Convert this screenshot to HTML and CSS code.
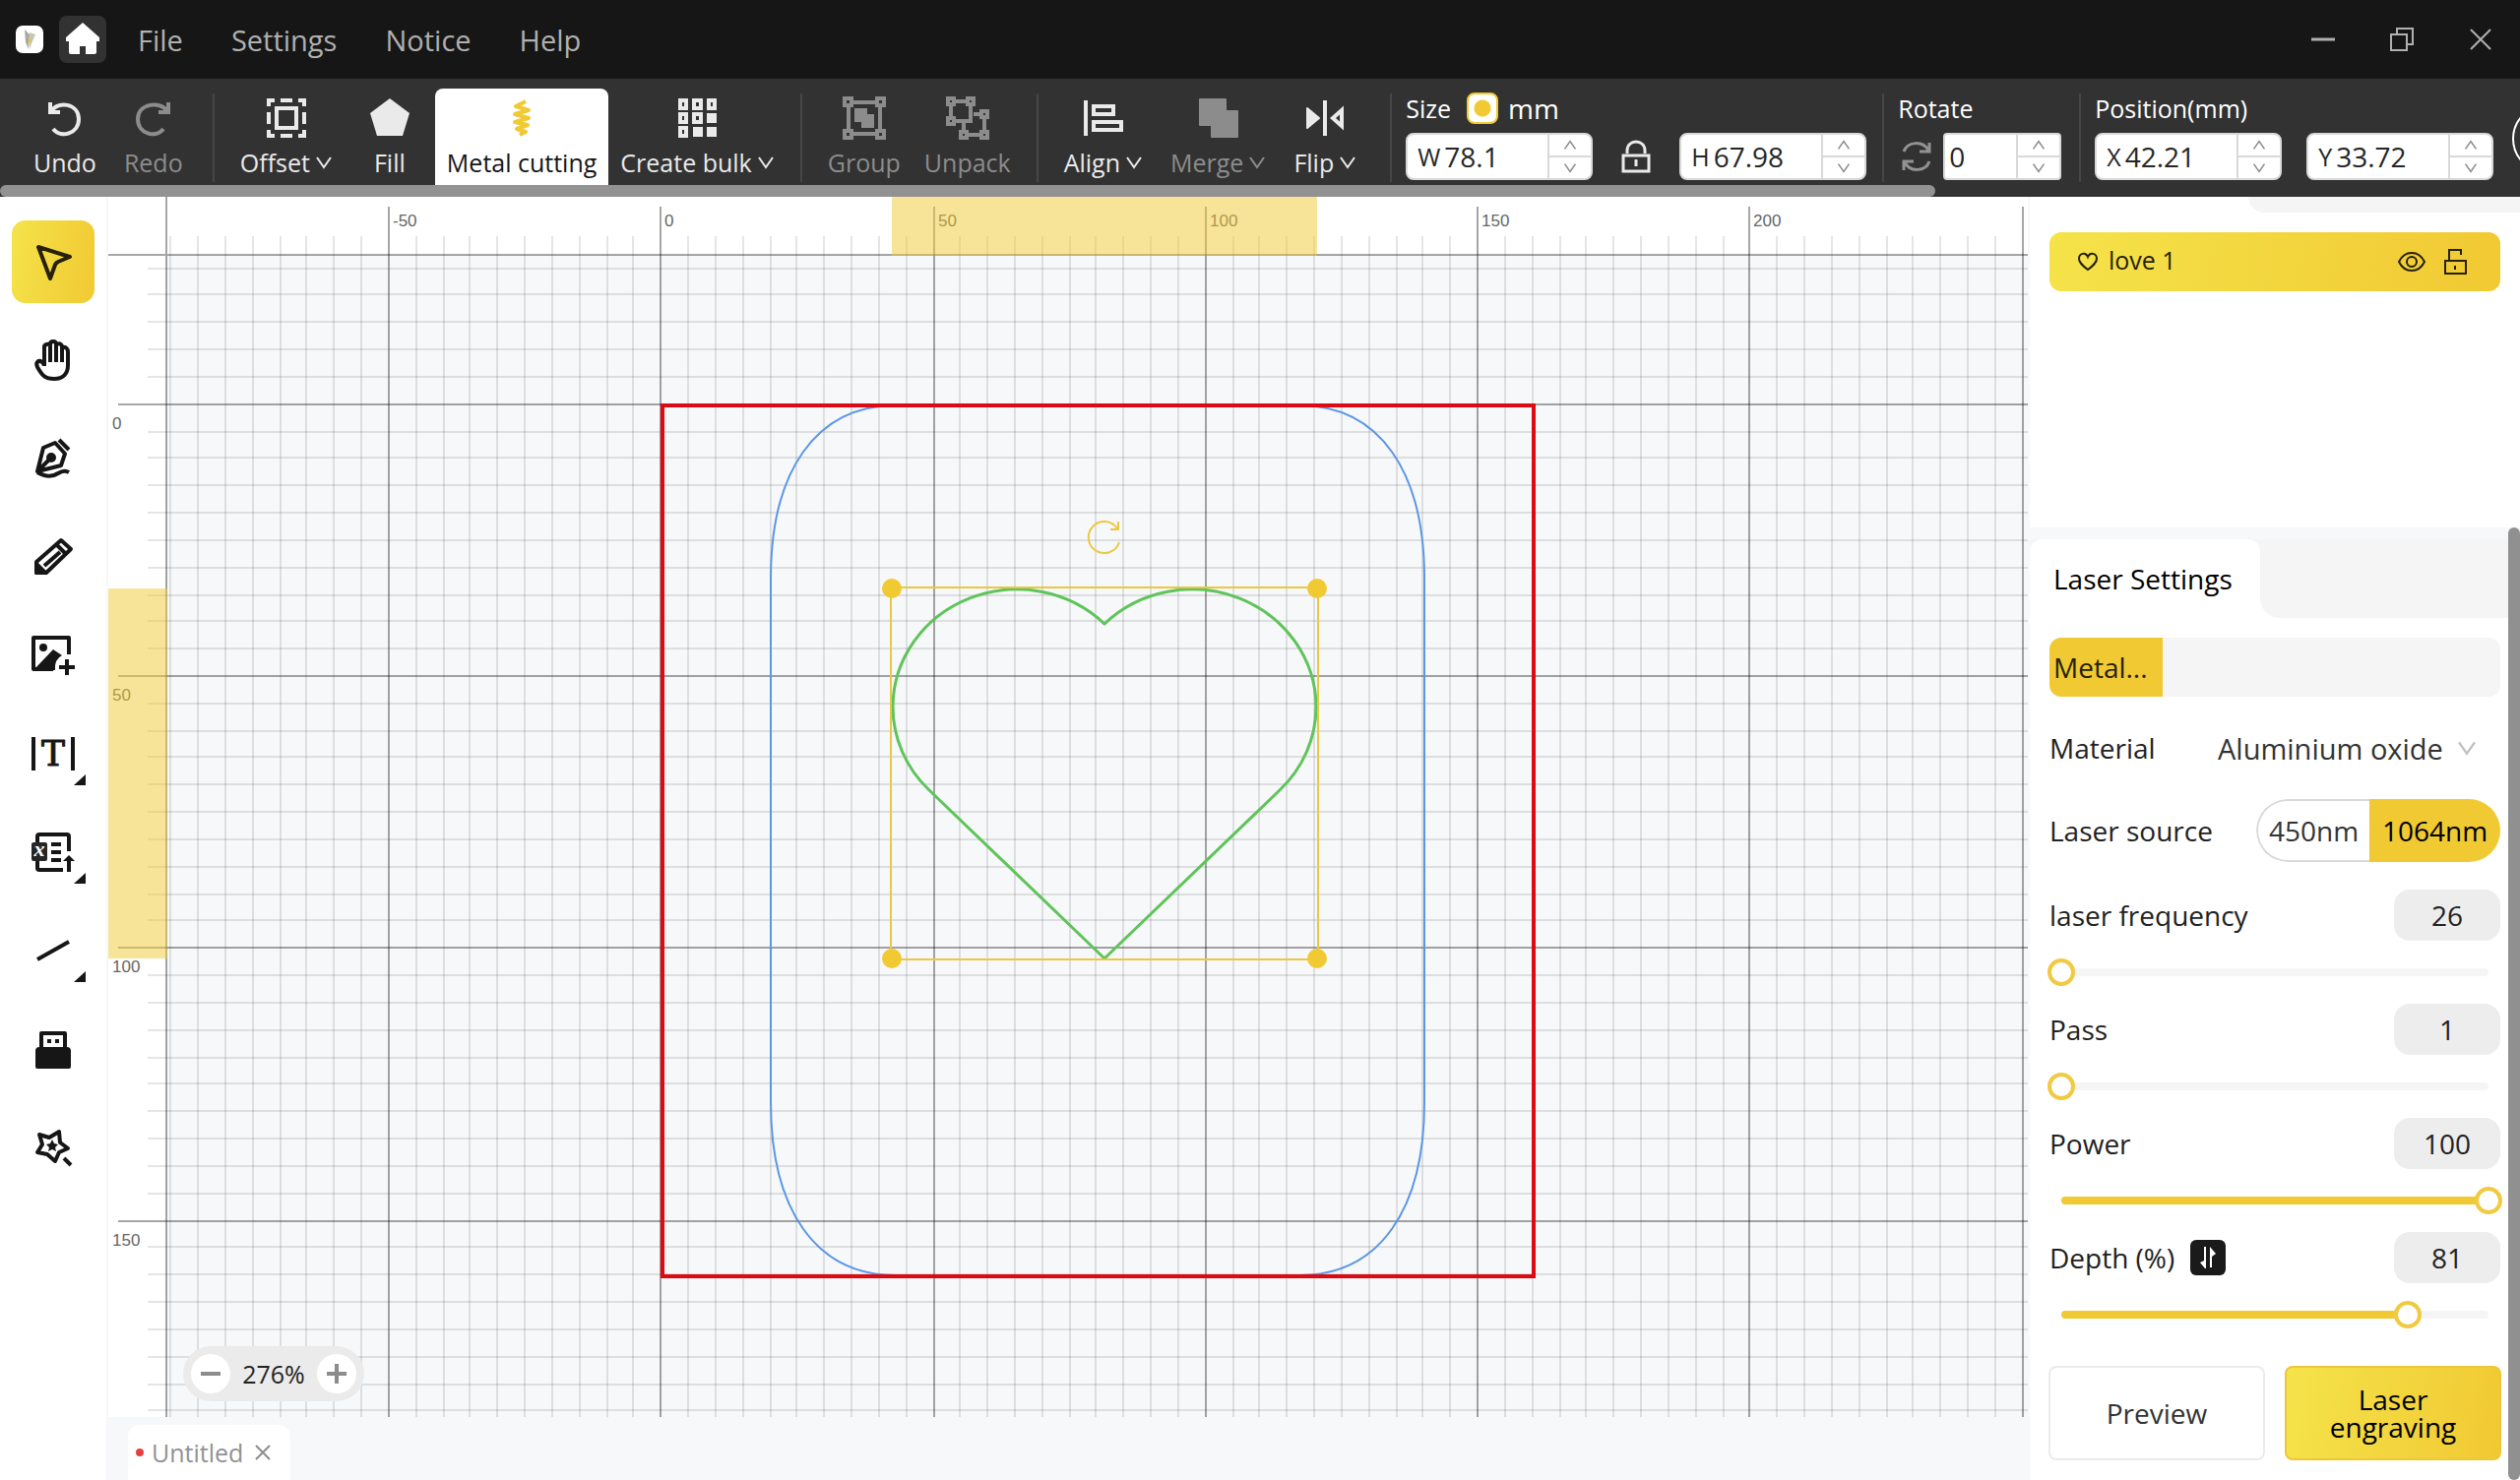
FILE: index.html
```html
<!DOCTYPE html>
<html lang="en">
<head>
    <meta charset="UTF-8">
    <meta name="viewport" content="width=device-width, initial-scale=1.0">
    <title>Untitled</title>
    <link rel="stylesheet" href="styles.css">
</head>
<body>
    <!-- Shared symbols -->
    <svg class="symbols" aria-hidden="true">
        <symbol id="chevron-down" viewBox="0 0 18 14"><path d="M2 2 L9 12 L16 2" fill="none" stroke="currentColor" stroke-width="2"/></symbol>
        <symbol id="chevron-up" viewBox="0 0 18 14"><path d="M2 12 L9 2 L16 12" fill="none" stroke="currentColor" stroke-width="2"/></symbol>
        <symbol id="corner" viewBox="0 0 84 84"><path d="M75 63 V74 H63 Z" fill="currentColor"/></symbol>
    </svg>

    <!-- Title bar -->
    <header class="titlebar">
        <svg class="app-logo" viewBox="0 0 28 28">
            <rect width="28" height="28" rx="7" fill="#fff"/>
            <path d="M9 4 L14 9 L13 24 L10 17 Z" fill="#a9a9a4"/>
            <path d="M14 7 L20 9 L17 16 L14 24 Z" fill="#c9c6b4"/>
            <path d="M13 13 L16 14 L14 20 Z" fill="#e8c53a"/>
        </svg>
        <button type="button" class="home-button" aria-label="Home">
            <svg viewBox="0 0 48 48"><path d="M24 7 L41 22 V26 H38 V37 Q38 39 36 39 H27 V31 H21 V39 H12 Q10 39 10 37 V26 H7 V22 Z" fill="#fff"/></svg>
        </button>
        <nav class="menu">
            <button type="button">File</button>
            <button type="button">Settings</button>
            <button type="button">Notice</button>
            <button type="button">Help</button>
        </nav>
        <div class="window-controls">
            <button type="button" aria-label="Minimize"><svg viewBox="0 0 24 24"><path d="M0 12 H24" stroke-width="3"/></svg></button>
            <button type="button" aria-label="Restore"><svg viewBox="0 0 24 24"><path d="M1 7 H17 V23 H1 Z M7 7 V1 H23 V17 H17"/></svg></button>
            <button type="button" aria-label="Close"><svg viewBox="0 0 24 24"><path d="M2 2 L22 22 M22 2 L2 22"/></svg></button>
        </div>
    </header>

    <!-- Toolbar -->
    <div class="toolbar">
        <div class="group history">
            <button type="button" class="tool">
                <svg viewBox="0 0 44 44"><path d="M7 6 V16 H17 M8 15 C15 4 36 7 36 23 C36 38 18 43 10 33" fill="none" stroke="currentColor" stroke-width="4"/></svg>
                <span>Undo</span>
            </button>
            <button type="button" class="tool" disabled>
                <svg viewBox="0 0 44 44"><path d="M37 6 V16 H27 M36 15 C29 4 6 7 6 23 C6 38 24 43 32 33" fill="none" stroke="currentColor" stroke-width="4"/></svg>
                <span>Redo</span>
            </button>
        </div>
        <div class="group edit">
            <button type="button" class="tool">
                <svg viewBox="0 0 44 44"><g fill="none" stroke="currentColor" stroke-width="4"><path d="M4 10 V4 H10 M16 4 H28 M34 4 H40 V10 M40 16 V28 M40 34 V40 H34 M28 40 H16 M10 40 H4 V34 M4 28 V16"/><rect x="12" y="12" width="20" height="20"/></g></svg>
                <span>Offset<svg class="chevron"><use href="#chevron-down"/></svg></span>
            </button>
            <button type="button" class="tool">
                <svg viewBox="0 0 44 44"><path d="M22 2 L42 17 L35 40 H9 L2 17 Z" fill="currentColor"/></svg>
                <span>Fill</span>
            </button>
            <button type="button" class="tool active">
                <svg viewBox="0 0 44 44"><path d="M26 5 L16 10 L29 14 L15 18 L29 22 L15 26 L28 29 L17 33 L26 36 L20 39" fill="none" stroke="#f1ca33" stroke-width="4" stroke-linejoin="round"/></svg>
                <span>Metal cutting</span>
            </button>
            <button type="button" class="tool">
                <svg viewBox="0 0 44 44"><g fill="none" stroke="currentColor" stroke-width="4"><path d="M4 4 H10 V12 H4 Z M18 4 H25 V12 H18 Z M33 4 H39 V12 H33 Z M4 18 H10 V26 H4 Z M18 18 H25 V26 H18 Z M4 32 H10 V40 H4 Z"/></g><path d="M31 17 H41 V27 H31 Z M17 31 H27 V41 H17 Z M31 31 H41 V41 H31 Z" fill="currentColor"/></svg>
                <span>Create bulk<svg class="chevron"><use href="#chevron-down"/></svg></span>
            </button>
        </div>
        <div class="group">
            <button type="button" class="tool" disabled>
                <svg viewBox="0 0 44 44"><g fill="none" stroke="currentColor" stroke-width="4"><path d="M2 2 H9 V9 H2 Z M35 2 H42 V9 H35 Z M2 35 H9 V42 H2 Z M35 35 H42 V42 H35 Z M9 6 H35 M9 38 H35 M6 9 V35 M38 9 V35"/></g><path d="M12 12 H25 V18 H32 V32 H19 V26 H12 Z" fill="currentColor"/></svg>
                <span>Group</span>
            </button>
            <button type="button" class="tool" disabled>
                <svg viewBox="0 0 44 44"><g fill="none" stroke="currentColor" stroke-width="4"><path d="M2 2 H8 V8 H2 Z M22 2 H28 V8 H22 Z M2 22 H8 V28 H2 Z M36 15 H42 V21 H36 Z M15 36 H21 V42 H15 Z M36 36 H42 V42 H36 Z M8 5 H22 M5 8 V22 M25 8 V25 H8 M28 18 H36 M39 21 V36 M36 39 H21 M18 36 V27"/></g></svg>
                <span>Unpack</span>
            </button>
        </div>
        <div class="group arrange">
            <button type="button" class="tool">
                <svg viewBox="0 0 44 44"><path d="M4 4 V40 M12 10 H32 V18 H12 Z M12 26 H40 V34 H12 Z" fill="none" stroke="currentColor" stroke-width="4"/></svg>
                <span>Align<svg class="chevron"><use href="#chevron-down"/></svg></span>
            </button>
            <button type="button" class="tool" disabled>
                <svg viewBox="0 0 44 44"><path d="M2 3 Q2 2 3 2 H29 Q30 2 30 3 V14 H41 Q42 14 42 15 V41 Q42 42 41 42 H15 Q14 42 14 41 V30 H3 Q2 30 2 29 Z" fill="currentColor"/></svg>
                <span>Merge<svg class="chevron"><use href="#chevron-down"/></svg></span>
            </button>
            <button type="button" class="tool">
                <svg viewBox="0 0 44 44"><path d="M22 4 V40" stroke="currentColor" stroke-width="4"/><path d="M4 12 L16 22 L4 32 Z" fill="currentColor" stroke="currentColor" stroke-width="2" stroke-linejoin="round"/><path d="M39 14 L30 22 L39 30 Z" fill="none" stroke="currentColor" stroke-width="4"/></svg>
                <span>Flip<svg class="chevron"><use href="#chevron-down"/></svg></span>
            </button>
        </div>
        <div class="fields">
            <div class="fields-title">
                Size
                <label class="unit"><input type="checkbox" checked>mm</label>
            </div>
            <div class="fields-row">
                <div class="number">
                    <label for="sizeW">W</label>
                    <input type="text" id="sizeW" value="78.1">
                    <div class="spin">
                        <button type="button" aria-label="Increase"><svg><use href="#chevron-up"/></svg></button>
                        <button type="button" aria-label="Decrease"><svg><use href="#chevron-down"/></svg></button>
                    </div>
                </div>
                <button type="button" class="icon-button" aria-label="Lock ratio">
                    <svg viewBox="0 0 30 34"><path d="M6 14 V11 C6 -1 24 -1 24 11 V14 M2 16 H28 V32 H2 Z M15 20 V27" fill="none" stroke="#eaeaea" stroke-width="3"/></svg>
                </button>
                <div class="number">
                    <label for="sizeH">H</label>
                    <input type="text" id="sizeH" value="67.98">
                    <div class="spin">
                        <button type="button" aria-label="Increase"><svg><use href="#chevron-up"/></svg></button>
                        <button type="button" aria-label="Decrease"><svg><use href="#chevron-down"/></svg></button>
                    </div>
                </div>
            </div>
        </div>
        <div class="fields rotate">
            <label class="fields-title" for="rotate">Rotate</label>
            <div class="fields-row">
                <button type="button" class="icon-button" aria-label="Reset rotation">
                    <svg viewBox="0 0 30 34"><path d="M2 12 C6 1 22 1 27 11 M28 3 V12 H18 M28 22 C24 33 8 33 3 23 M2 31 V22 H12" fill="none" stroke="#929292" stroke-width="3"/></svg>
                </button>
                <div class="number small">
                    <input type="text" id="rotate" value="0">
                    <div class="spin">
                        <button type="button" aria-label="Increase"><svg><use href="#chevron-up"/></svg></button>
                        <button type="button" aria-label="Decrease"><svg><use href="#chevron-down"/></svg></button>
                    </div>
                </div>
            </div>
        </div>
        <div class="fields position">
            <div class="fields-title">Position(mm)</div>
            <div class="fields-row">
                <div class="number">
                    <label for="posX">X</label>
                    <input type="text" id="posX" value="42.21">
                    <div class="spin">
                        <button type="button" aria-label="Increase"><svg><use href="#chevron-up"/></svg></button>
                        <button type="button" aria-label="Decrease"><svg><use href="#chevron-down"/></svg></button>
                    </div>
                </div>
                <div class="number">
                    <label for="posY">Y</label>
                    <input type="text" id="posY" value="33.72">
                    <div class="spin">
                        <button type="button" aria-label="Increase"><svg><use href="#chevron-up"/></svg></button>
                        <button type="button" aria-label="Decrease"><svg><use href="#chevron-down"/></svg></button>
                    </div>
                </div>
            </div>
        </div>
        <button type="button" class="round-button" aria-label="More"></button>
    </div>
    <div class="toolbar-scroll"><div class="toolbar-thumb"></div></div>

    <main class="workspace">
        <!-- Left tools -->
        <aside class="sidebar">
            <button type="button" class="active" aria-label="Select">
                <svg viewBox="0 0 84 84"><path d="M27 27 L59 37 L47 42 Q45 43 44 45 L39 59 Z"/></svg>
            </button>
            <button type="button" aria-label="Pan">
                <svg viewBox="0 0 84 84"><path d="M33 48 V28 Q34 25 39 26 M39 44 V26 Q39 23 42 23 Q45 23 45 26 V44 M45 26 Q50 24 51 28 V44 M51 29 Q57 28 57 34 V47 C57 56 52 61 43 61 C34 61 31 58 26 49 Q24 45 27 43 Q30 42 33 47"/></svg>
            </button>
            <button type="button" aria-label="Pen">
                <svg viewBox="0 0 84 84"><path d="M26 55 L32 31 L44 26 L54 37 L50 49 Z M26 55 L39 42 M48 23 L58 33 M26 56 Q38 63 47 57 Q53 53 58 56"/><circle cx="40" cy="41" r="3" fill="currentColor"/></svg>
            </button>
            <button type="button" aria-label="Pencil">
                <svg viewBox="0 0 84 84"><path d="M25 58 V47 L50 25 L60 34 L35 58 Z M45 29 L55 39 M33 51 L49 37"/><path d="M25 58 V49 L34 58 Z" fill="currentColor"/></svg>
            </button>
            <button type="button" aria-label="Image">
                <svg viewBox="0 0 84 84"><path d="M58 41 V24 H22 V56 H42 M56 46 V62 M48 54 H64"/><path d="M22 57 L42 36 L51 42 Q43 46 44 57 Z" fill="currentColor" stroke="none"/><circle cx="32" cy="34" r="4" fill="currentColor" stroke="none"/></svg>
            </button>
            <button type="button" aria-label="Text">
                <svg viewBox="0 0 84 84"><path d="M22 25 V59 M62 25 V59"/><text x="42" y="54" class="glyph-t">T</text><use href="#corner" stroke="none"/></svg>
            </button>
            <button type="button" aria-label="Import">
                <svg viewBox="0 0 84 84"><path d="M26 32 V26 Q26 24 28 24 H56 Q58 24 58 26 V41 M26 51 V58 Q26 60 28 60 H52 M40 34 H50 M40 42 H50 M40 50 H50 M58 51 V62"/><path d="M52 51 L58 45 L64 51 Z" fill="currentColor" stroke="none"/><rect x="20" y="32" width="16" height="19" rx="2" fill="#262626" stroke="none"/><text x="28" y="46" class="glyph-x">x</text><use href="#corner" stroke="none"/></svg>
            </button>
            <button type="button" aria-label="Line">
                <svg viewBox="0 0 84 84"><path d="M26 51 L58 33"/><use href="#corner" stroke="none"/></svg>
            </button>
            <button type="button" aria-label="USB">
                <svg viewBox="0 0 84 84"><path d="M30 42 V26 H54 V42"/><path d="M28 40 H56 Q60 40 60 44 V60 Q60 62 58 62 H26 Q24 62 24 60 V44 Q24 40 28 40 Z M36 32 H40 V36 H36 Z M44 32 H48 V36 H44 Z" fill="currentColor" stroke="none"/></svg>
            </button>
            <button type="button" aria-label="Magic">
                <svg viewBox="0 0 84 84"><path d="M28 29 L38 32 L48 26 L49 37 L57 43 L48 47 L44 56 L36 49 L26 47 L31 39 Z M53 53 L60 60" /><path d="M41 34 L43 38 L47 39 L44 42 L45 46 L41 44 L37 46 L38 42 L35 39 L39 38 Z" fill="currentColor" stroke="none"/></svg>
            </button>
        </aside>

        <!-- Canvas -->
        <section class="stage">
            <div class="canvas">
                <svg class="board">
                    <rect class="grid-bg" x="59" y="59" width="100%" height="100%"/>
                    <g id="grid"></g>
                    <path class="major" d="M59 0 V4000 M0 59 H4000"/>
                    <g id="labels"></g>
                    <rect class="ruler-mark" x="796" y="0" width="432" height="60"/>
                    <rect class="ruler-mark" x="0" y="398" width="60" height="376"/>
                    <path class="plate" d="M800 212 H1210 C1292 212 1337 280 1337 388 V920 C1337 1028 1292 1096 1210 1096 H800 C718 1096 673 1028 673 920 V388 C673 280 718 212 800 212 Z"/>
                    <rect class="work-area" x="563" y="212" width="885" height="885"/>
                    <path class="heart" d="M1012 434 A126 120 0 0 0 797 518 A126 120 0 0 0 834 603 L1012 774 L1190 603 A126 120 0 0 0 1227 518 A126 120 0 0 0 1012 434 Z"/>
                    <rect class="selection" x="795" y="397" width="434" height="378"/>
                    <g class="handles">
                        <circle cx="796" cy="398" r="10"/>
                        <circle cx="1228" cy="398" r="10"/>
                        <circle cx="796" cy="774" r="10"/>
                        <circle cx="1228" cy="774" r="10"/>
                    </g>
                    <path class="rotate-handle" d="M1027 351 A16 16 0 1 1 1025 337 M1026 330 V338 H1018"/>
                </svg>
                <div class="zoom">
                    <button type="button" aria-label="Zoom out"><svg viewBox="0 0 20 20"><path d="M0 10 H20"/></svg></button>
                    <span>276%</span>
                    <button type="button" aria-label="Zoom in"><svg viewBox="0 0 20 20"><path d="M0 10 H20 M10 0 V20"/></svg></button>
                </div>
            </div>
            <footer class="tabs">
                <div class="tab">
                    <span class="dot"></span>
                    <span>Untitled</span>
                    <button type="button" aria-label="Close tab"><svg viewBox="0 0 16 16"><path d="M1 1 L15 15 M15 1 L1 15"/></svg></button>
                </div>
            </footer>
        </section>

        <!-- Right panel -->
        <aside class="panel">
            <div class="layers">
                <div class="layers-head"></div>
                <div class="layer">
                    <svg class="layer-heart" viewBox="0 0 22 20"><path d="M11 18 C6 14 2 11 2 7 C2 1 9 0 11 5 C13 0 20 1 20 7 C20 11 16 14 11 18 Z"/></svg>
                    <span class="layer-name">love 1</span>
                    <button type="button" aria-label="Visible"><svg viewBox="0 0 28 28"><path d="M1 14 C7 2 21 2 27 14 C21 26 7 26 1 14 Z"/><circle cx="14" cy="14" r="5"/></svg></button>
                    <button type="button" aria-label="Unlock"><svg viewBox="0 0 28 28"><path d="M4 13 H25 V26 H4 Z M8 13 V2 H20 V7 M14 18 V22"/></svg></button>
                </div>
            </div>
            <div class="settings">
                <div class="settings-body">
                    <div class="settings-head">
                        <h2>Laser Settings</h2>
                        <div class="head-rest"></div>
                    </div>
                    <div class="modes"><button type="button">Metal...</button></div>
                    <div class="row material">
                        <label for="material">Material</label>
                        <div class="select">
                            <select id="material"><option>Aluminium oxide</option></select>
                            <svg><use href="#chevron-down"/></svg>
                        </div>
                    </div>
                    <div class="row source">
                        <span>Laser source</span>
                        <div class="segment">
                            <button type="button">450nm</button>
                            <button type="button" class="on">1064nm</button>
                        </div>
                    </div>
                    <div class="param">
                        <div class="row">
                            <label for="frequency">laser frequency</label>
                            <input type="text" class="value" aria-label="laser frequency value" value="26">
                        </div>
                        <div class="slider">
                            <div class="track"><div class="fill" style="width: 0%"></div></div>
                            <input type="range" id="frequency" min="26" max="60" value="26">
                        </div>
                    </div>
                    <div class="param">
                        <div class="row">
                            <label for="pass">Pass</label>
                            <input type="text" class="value" aria-label="Pass value" value="1">
                        </div>
                        <div class="slider">
                            <div class="track"><div class="fill" style="width: 0%"></div></div>
                            <input type="range" id="pass" min="1" max="99" value="1">
                        </div>
                    </div>
                    <div class="param">
                        <div class="row">
                            <label for="power">Power</label>
                            <input type="text" class="value" aria-label="Power value" value="100">
                        </div>
                        <div class="slider">
                            <div class="track"><div class="fill" style="width: 100%"></div></div>
                            <input type="range" id="power" min="0" max="100" value="100">
                        </div>
                    </div>
                    <div class="param">
                        <div class="row">
                            <div class="depth">
                                <label for="depth">Depth (%)</label>
                                <button type="button" aria-label="Switch depth and speed"><svg viewBox="0 0 36 36"><rect width="36" height="36" rx="6" fill="#1a1a1a"/><path d="M14 7 H16 V29 H15 L10 23 L14 21 Z M20 7 L26 14 L22 17 V28 H20 Z" fill="#fff"/></svg></button>
                            </div>
                            <input type="text" class="value" aria-label="Depth value" value="81">
                        </div>
                        <div class="slider">
                            <div class="track"><div class="fill" style="width: 81%"></div></div>
                            <input type="range" id="depth" min="0" max="100" value="81">
                        </div>
                    </div>
                    <div class="actions">
                        <button type="button" class="preview">Preview</button>
                        <button type="button" class="engrave">Laser engraving</button>
                    </div>
                </div>
                <div class="scrollbar"></div>
            </div>
        </aside>
    </main>

    <script>
        // Ruler and grid: one cell is 5 mm, every tenth line is labelled
        const cell = 27.66;
        const originX = 561.4;
        const originY = 210.4;
        const grid = document.getElementById('grid');
        const labels = document.getElementById('labels');
        const canvas = document.querySelector('.canvas');

        function snap(value) {
            return 2 * Math.floor(value / 2) + 1;
        }

        function addLine(d, major) {
            const path = document.createElementNS('http://www.w3.org/2000/svg', 'path');
            path.setAttribute('d', d);
            path.setAttribute('class', major ? 'major' : 'minor');
            grid.appendChild(path);
        }

        function addLabel(x, y, text) {
            const label = document.createElementNS('http://www.w3.org/2000/svg', 'text');
            label.setAttribute('x', x);
            label.setAttribute('y', y);
            label.textContent = text;
            labels.appendChild(label);
        }

        function drawGrid() {
            const width = canvas.clientWidth;
            const height = canvas.clientHeight;
            grid.textContent = '';
            labels.textContent = '';

            for (let i = -18; originX + i * cell < width; i++) {
                const x = snap(originX + i * cell);
                const major = i % 10 === 0;
                addLine(`M${x} ${major ? 10 : 40} V${height}`, major);
                if (major && x + 40 < width) {
                    addLabel(x + 4, 30, i * 5);
                }
            }
            for (let i = -5; originY + i * cell < height; i++) {
                const y = snap(originY + i * cell);
                const major = i % 10 === 0;
                addLine(`M${major ? 10 : 40} ${y} H${width}`, major);
                if (major) {
                    addLabel(4, y + 25, i * 5);
                }
            }
        }

        drawGrid();
        window.addEventListener('resize', drawGrid);
    </script>
</body>
</html>
```
FILE: styles.css
```css
* {
    box-sizing: border-box;
}
body {
    margin: 0;
    height: 100vh;
    display: flex;
    flex-direction: column;
    overflow: hidden;
    font-family: "Open Sans", "Noto Sans", sans-serif;
    font-size: 28px;
    color: #222;
    background-color: #fff;
}
button, input, select {
    font: inherit;
    color: inherit;
    margin: 0;
    padding: 0;
    border: none;
    background: none;
}
button {
    cursor: pointer;
}
svg {
    display: block;
}
.symbols {
    position: absolute;
    width: 0;
    height: 0;
}

/* Title bar */
.titlebar {
    height: 80px;
    flex: none;
    display: flex;
    align-items: center;
    padding-left: 16px;
    background-color: #161616;
    color: #b0b0b0;
}
.app-logo {
    width: 28px;
    height: 28px;
    margin-right: 16px;
}
.home-button {
    width: 48px;
    height: 48px;
    border-radius: 8px;
    background-color: #323232;
}
.menu {
    display: flex;
    gap: 49px;
    margin-left: 32px;
    font-size: 29px;
}
.window-controls {
    display: flex;
    gap: 56px;
    margin-left: auto;
    padding-right: 28px;
}
.window-controls svg {
    width: 24px;
    height: 24px;
    fill: none;
    stroke: #b0b0b0;
    stroke-width: 2;
}

/* Toolbar */
.toolbar {
    height: 108px;
    flex: none;
    display: flex;
    padding-top: 10px;
    overflow: hidden;
    background-color: #323232;
    color: #eaeaea;
    font-size: 25px;
}
.group, .fields {
    flex: none;
    display: flex;
    position: relative;
}
.group {
    padding: 0 16px 0 14px;
}
.group.history {
    gap: 4px;
    padding: 0 20px 0 22px;
}
.group.edit {
    gap: 12px;
}
.group.arrange {
    gap: 4px;
    padding-right: 24px;
}
.group::after, .fields::after {
    content: "";
    position: absolute;
    right: 0;
    top: 5px;
    width: 2px;
    height: 90px;
    background-color: #464646;
}
.fields.position::after {
    display: none;
}
.tool {
    display: flex;
    flex-direction: column;
    align-items: center;
    gap: 5px;
    padding: 8px 12px 0;
    white-space: nowrap;
}
.tool:disabled {
    color: #8c8c8c;
}
.tool.active {
    margin-right: -12px;
    border-radius: 8px 8px 0 0;
    background-color: #fff;
    color: #161616;
}
.tool > svg {
    width: 44px;
    height: 44px;
}
.tool span {
    display: flex;
    align-items: center;
    gap: 5px;
    line-height: 36px;
}
.chevron {
    width: 18px;
    height: 14px;
}
.fields {
    width: 500px;
    flex-direction: column;
    padding-left: 14px;
}
.fields.rotate {
    width: 200px;
}
.fields.position {
    width: 438px;
}
.fields-title {
    display: flex;
    align-items: center;
    height: 40px;
    color: #fff;
}
.unit {
    display: flex;
    align-items: center;
    gap: 10px;
    margin-left: 16px;
    font-size: 28px;
}
.unit input {
    appearance: none;
    width: 32px;
    height: 32px;
    border: 2px solid #f1ca33;
    border-radius: 8px;
    background: radial-gradient(circle, #f1ca33 8px, #fff 9px);
}
.fields-row {
    display: flex;
    align-items: center;
    gap: 29px;
    margin-top: 5px;
    height: 48px;
}
.rotate .fields-row {
    gap: 12px;
    padding-left: 4px;
}
.position .fields-row {
    gap: 25px;
}
.icon-button {
    width: 30px;
    height: 34px;
}
.number {
    display: flex;
    align-items: center;
    width: 190px;
    height: 48px;
    overflow: hidden;
    border: 2px solid #d9d9d9;
    border-radius: 8px;
    background-color: #fff;
    color: #262626;
}
.number label {
    padding: 0 4px 0 10px;
}
.number input {
    flex: 1;
    width: 0;
    font-size: 28px;
}
.number.small {
    width: 120px;
    border-radius: 4px;
}
.number.small input {
    padding-left: 4px;
}
.spin {
    display: flex;
    flex-direction: column;
    width: 44px;
    height: 100%;
    border-left: 2px solid #d9d9d9;
}
.spin button {
    display: flex;
    flex: 1;
    align-items: center;
    justify-content: center;
    color: #8c8c8c;
}
.spin button + button {
    border-top: 2px solid #d9d9d9;
}
.spin svg {
    width: 14px;
    height: 11px;
}
.round-button {
    flex: none;
    width: 70px;
    height: 70px;
    margin-top: 16px;
    border: 2px solid #fff;
    border-radius: 50%;
}
.toolbar-scroll {
    flex: none;
    height: 12px;
    background-color: #323232;
}
.toolbar-thumb {
    width: 76.8%;
    height: 12px;
    border-radius: 6px;
    background-color: #929292;
}

/* Left tools */
.workspace {
    flex: 1;
    min-height: 0;
    display: flex;
}
.sidebar {
    flex: none;
    display: flex;
    flex-direction: column;
    align-items: flex-start;
    gap: 16px;
    width: 110px;
    padding: 24px 0 0 12px;
    border-right: 2px solid #f7f8fa;
    color: #161616;
}
.sidebar button {
    width: 84px;
    height: 84px;
    border-radius: 14px;
}
.sidebar .active {
    background: linear-gradient(100deg, #f5e34a, #f1c933);
    color: #262108;
}
.sidebar svg {
    fill: none;
    stroke: currentColor;
    stroke-width: 4;
    stroke-linejoin: round;
}
.glyph-t, .glyph-x {
    fill: currentColor;
    stroke: none;
    text-anchor: middle;
    font: 36px "DejaVu Serif", serif;
}
.glyph-t {
    stroke: currentColor;
    stroke-width: 1;
}
.glyph-x {
    fill: #fff;
    font: italic bold 22px "Liberation Serif", serif;
}

/* Canvas */
.stage {
    flex: 1;
    min-width: 0;
    display: flex;
    flex-direction: column;
    background-color: #f7f8fa;
}
.canvas {
    flex: 1;
    min-height: 0;
    position: relative;
    background-color: #fff;
}
.board {
    position: absolute;
    width: 100%;
    height: 100%;
    fill: none;
}
.grid-bg {
    fill: #f7f8fa;
}
.minor {
    stroke: rgba(0, 0, 0, 0.1);
    stroke-width: 2;
}
.major {
    stroke: rgba(0, 0, 0, 0.35);
    stroke-width: 2;
}
#labels {
    fill: #666;
    font: 17px "Liberation Sans", Arial, sans-serif;
}
.ruler-mark {
    fill: #f1ca33;
    fill-opacity: 0.5;
}
.work-area {
    stroke: #dd0a14;
    stroke-width: 4;
}
.plate {
    stroke: #5b97e5;
    stroke-width: 2;
}
.heart {
    stroke: #5fc45a;
    stroke-width: 3;
}
.selection, .rotate-handle {
    stroke: #ebc842;
    stroke-width: 2;
}
.handles {
    fill: #f1ca33;
}
.zoom {
    position: absolute;
    left: 76px;
    bottom: 16px;
    display: flex;
    align-items: center;
    justify-content: space-between;
    width: 184px;
    height: 56px;
    padding: 0 8px;
    border-radius: 28px;
    background-color: #ebebeb;
    font-size: 25px;
}
.zoom button {
    display: flex;
    align-items: center;
    justify-content: center;
    width: 40px;
    height: 40px;
    border-radius: 50%;
    background-color: #fff;
}
.zoom svg {
    width: 20px;
    height: 20px;
    stroke: #8c8c8c;
    stroke-width: 4;
}
.tabs {
    flex: none;
    display: flex;
    height: 64px;
    padding: 8px 20px 0;
}
.tab {
    display: flex;
    align-items: center;
    padding: 0 20px 0 8px;
    border-radius: 12px 12px 0 0;
    background-color: #fff;
    color: #929292;
    font-size: 25px;
}
.dot {
    width: 8px;
    height: 8px;
    margin-right: 8px;
    border-radius: 50%;
    background-color: #e5403f;
}
.tab button {
    margin-left: 12px;
}
.tab svg {
    width: 16px;
    height: 16px;
    stroke: #8c8c8c;
    stroke-width: 2;
}

/* Right panel */
.panel {
    flex: none;
    display: flex;
    flex-direction: column;
    width: 500px;
    border-left: 2px solid #f7f8fa;
}
.layers {
    flex: none;
    height: 336px;
}
.layers-head {
    height: 16px;
    margin-left: 222px;
    border-radius: 0 0 0 20px;
    background-color: #f5f5f5;
}
.layer {
    display: flex;
    align-items: center;
    height: 60px;
    margin: 20px 20px 0;
    padding: 0 32px 0 28px;
    border-radius: 12px;
    background: linear-gradient(100deg, #f5e34a, #f1c933);
    color: #262108;
    font-size: 25px;
}
.layer svg {
    fill: none;
    stroke: currentColor;
    stroke-width: 2;
}
.layer-heart {
    width: 22px;
    height: 20px;
}
.layer-name {
    flex: 1;
    margin: 0 0 4px 10px;
}
.layer button {
    margin-left: 16px;
}
.layer button svg {
    width: 28px;
    height: 28px;
}
.settings {
    flex: 1;
    min-height: 0;
    display: flex;
    border-top: 12px solid #f7f8fa;
}
.settings-body {
    flex: 1;
    min-width: 0;
    display: flex;
    flex-direction: column;
}
.scrollbar {
    width: 12px;
    margin-top: -12px;
    border-radius: 6px;
    background-color: #909090;
}
.settings-head {
    display: flex;
    height: 80px;
    background: linear-gradient(#f5f5f5 50%, #fff 50%);
}
.settings-head h2 {
    width: 234px;
    margin: 0;
    padding-left: 24px;
    border-radius: 12px 12px 0 0;
    background-color: #fff;
    color: #000;
    font-size: 28px;
    font-weight: normal;
    line-height: 80px;
    white-space: nowrap;
}
.head-rest {
    flex: 1;
    border-radius: 0 0 0 20px;
    background-color: #f5f5f5;
}
.modes {
    height: 60px;
    margin: 20px 8px 0 20px;
    overflow: hidden;
    border-radius: 12px;
    background-color: #f5f5f5;
}
.modes button {
    width: 115px;
    height: 60px;
    padding-left: 4px;
    background-color: #f1ca33;
    color: #262108;
    text-align: left;
}
.row {
    display: flex;
    align-items: center;
    justify-content: space-between;
    padding: 0 8px 0 20px;
}
.material {
    height: 104px;
}
.select {
    display: flex;
    align-items: center;
    gap: 12px;
    padding-right: 22px;
    color: #333;
    font-size: 29px;
}
.select select {
    appearance: none;
}
.select svg {
    width: 24px;
    height: 16px;
    color: #bfbfbf;
}
.segment {
    display: flex;
    width: 248px;
    height: 64px;
    overflow: hidden;
    border-radius: 32px;
    color: #333;
}
.segment button {
    flex: 1;
    border: 2px solid #d9d9d9;
    border-right: none;
    border-radius: 32px 0 0 32px;
}
.segment .on {
    flex: none;
    width: 133px;
    border: none;
    border-radius: 0;
    background-color: #f1ca33;
    color: #000;
}
.source {
    margin-bottom: 28px;
}
.param {
    height: 116px;
}
.value {
    width: 108px;
    height: 52px;
    border-radius: 16px;
    background-color: #ededed;
    text-align: center;
}
.slider {
    display: grid;
    align-items: center;
    height: 28px;
    margin: 18px 6px 0 18px;
}
.slider > * {
    grid-area: 1 / 1;
}
.track {
    height: 8px;
    margin: 0 14px;
    border-radius: 4px;
    background-color: #f5f5f5;
}
.fill {
    height: 8px;
    border-radius: 4px;
    background-color: #f1ca33;
}
.slider input {
    appearance: none;
    width: 100%;
    height: 28px;
}
.slider input::-webkit-slider-thumb {
    appearance: none;
    width: 28px;
    height: 28px;
    border: 4px solid #f1ca43;
    border-radius: 50%;
    background-color: #fff;
}
.depth {
    display: flex;
    align-items: center;
    gap: 16px;
}
.depth svg {
    width: 36px;
    height: 36px;
}
.actions {
    display: flex;
    gap: 20px;
    margin: 20px 7px 0 19px;
}
.actions button {
    flex: 1 1 0;
    min-width: 0;
    height: 96px;
    padding: 0 20px;
    border: 2px solid #ebebeb;
    border-radius: 8px;
    line-height: 28px;
}
.actions .preview {
    color: #333;
}
.actions .engrave {
    border-color: #edc73a;
    background: linear-gradient(100deg, #f5e34a, #f1c933);
    color: #000;
}
```
